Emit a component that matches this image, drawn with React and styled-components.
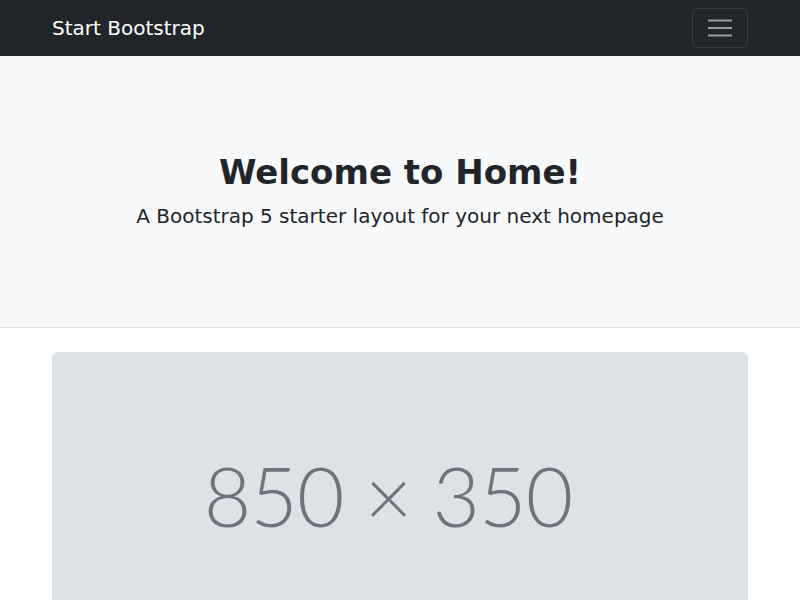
import React from "react";
import styled, { createGlobalStyle } from "styled-components";

const GlobalStyle = createGlobalStyle`
  html, body {
    margin: 0;
    padding: 0;
  }
  body {
    font-family: "DejaVu Sans", "Liberation Sans", sans-serif;
    font-size: 16px;
    line-height: 1.5;
    color: #212529;
    background: #fff;
  }
  * {
    box-sizing: border-box;
  }
`;

const Container = styled.div`
  width: 720px;
  margin: 0 auto;
  padding: 0 12px;
`;

const Navbar = styled.nav`
  background: #212529;
  padding: 8px 0;
`;

const NavInner = styled(Container)`
  display: flex;
  align-items: center;
  justify-content: space-between;
`;

const Brand = styled.a`
  color: #fff;
  font-size: 20px;
  line-height: 30px;
  padding: 5px 0;
  text-decoration: none;
`;

const Toggler = styled.button`
  width: 56px;
  height: 40px;
  padding: 0;
  display: flex;
  align-items: center;
  justify-content: center;
  background: transparent;
  border: 1px solid rgba(255, 255, 255, 0.1);
  border-radius: 6px;
`;

const Header = styled.header`
  background: #f8f9fa;
  border-bottom: 1px solid #dee2e6;
  padding: 48px 0;
  margin-bottom: 24px;
`;

const Hero = styled.div`
  text-align: center;
  margin: 48px 0;
`;

const Title = styled.h1`
  margin: 0 0 8px;
  font-size: 34px;
  line-height: 1.2;
  font-weight: 700;
  color: #212529;
`;

const Lead = styled.p`
  margin: 0;
  font-size: 20px;
  line-height: 30px;
  font-weight: 400;
`;

const Placeholder = styled.div`
  height: 287px;
  padding-right: 24px;
  border-radius: 6px;
  background: #dee2e6;
  color: #6c757d;
  display: flex;
  align-items: center;
  justify-content: center;
  font-family: "Lato", "Open Sans", sans-serif;
  font-weight: 300;
  font-size: 82px;
  line-height: 1;
  letter-spacing: -1px;
`;

const HamburgerIcon = () => (
  <svg width="30" height="30" viewBox="0 0 30 30">
    <path
      d="M3 7.5h24M3 15h24M3 22.5h24"
      stroke="rgba(255,255,255,0.55)"
      strokeWidth="2"
    />
  </svg>
);

export default function App() {
  return (
    <>
      <GlobalStyle />
      <Navbar>
        <NavInner>
          <Brand href="#">Start Bootstrap</Brand>
          <Toggler aria-label="Toggle navigation">
            <HamburgerIcon />
          </Toggler>
        </NavInner>
      </Navbar>
      <Header>
        <Container>
          <Hero>
            <Title>Welcome to Home!</Title>
            <Lead>A Bootstrap 5 starter layout for your next homepage</Lead>
          </Hero>
        </Container>
      </Header>
      <Container>
        <Placeholder>850 × 350</Placeholder>
      </Container>
    </>
  );
}
